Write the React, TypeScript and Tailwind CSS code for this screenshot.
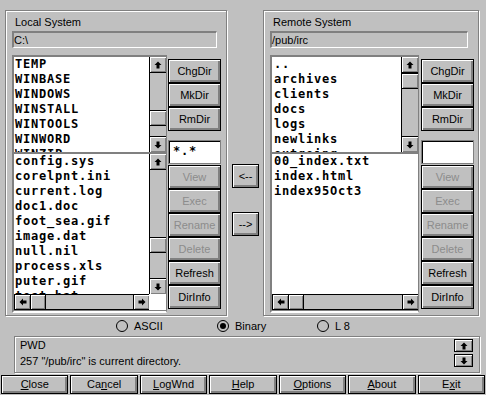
import React from "react";

const sans = "font-['Liberation_Sans',Arial,sans-serif]";
const mono =
  "font-['DejaVu_Sans_Mono',monospace] font-bold text-[12px] tracking-[0.78px] leading-[15px] whitespace-nowrap";
const raised = "shadow-[inset_1px_1px_0_#fff,inset_-2px_-2px_0_#808080]";
const etched = "border border-[#808080] shadow-[inset_1px_1px_0_#fff,1px_1px_0_#fff]";

type Dir = "up" | "down" | "left" | "right";

function Arrow({ dir }: { dir: Dir }) {
  const rot = { up: 0, down: 180, left: 270, right: 90 }[dir];
  return (
    <svg width="8" height="8" viewBox="0 0 8 8">
      <g transform={`rotate(${rot} 4 4)`}>
        <path d="M4 0.5 L7.5 4 L5.5 4 L5.5 7.5 L2.5 7.5 L2.5 4 L0.5 4 Z" fill="#000" />
      </g>
    </svg>
  );
}

function SBtn({ dir, className = "" }: { dir: Dir; className?: string }) {
  return (
    <div
      className={`flex items-center justify-center bg-[#c0c0c0] shadow-[inset_1px_1px_0_#fff,inset_-1px_-1px_0_#808080] ${className}`}
    >
      <Arrow dir={dir} />
    </div>
  );
}

function VScroll({ thumb }: { thumb: string }) {
  return (
    <div className="flex w-[17px] shrink-0 flex-col border-l border-black bg-[#c0c0c0]">
      <SBtn dir="up" className="h-[16px] border-b border-black" />
      <div
        className={`h-[16px] border-y border-black bg-[#c0c0c0] shadow-[inset_1px_1px_0_#fff,inset_-1px_-1px_0_#808080] ${thumb}`}
      />
      <SBtn dir="down" className="mt-auto h-[16px] border-t border-black" />
    </div>
  );
}

function HScroll() {
  return (
    <div className="flex h-[16px] flex-1 border-y border-l border-black bg-[#c0c0c0]">
      <SBtn dir="left" className="w-[16px] border-r border-black" />
      <div className="w-[15px] border-r border-black shadow-[inset_1px_1px_0_#fff,inset_-1px_-1px_0_#808080]" />
      <div className="flex-1" />
      <SBtn dir="right" className="w-[16px] border-l border-black" />
    </div>
  );
}

function Btn({
  label,
  disabled,
  className = "",
}: {
  label: React.ReactNode;
  disabled?: boolean;
  className?: string;
}) {
  return (
    <div
      className={`flex shrink-0 items-center justify-center border border-black bg-[#c0c0c0] leading-none ${raised} ${
        disabled ? "text-[#8c8c8c]" : "text-black"
      } ${className}`}
    >
      {label}
    </div>
  );
}

type PanelProps = {
  title: string;
  path: string;
  dirs: string[];
  files: string[];
  w: string;
  pathW: string;
  listW: string;
  gap: string;
  dirThumb: string;
  fileThumb?: string;
  filter: string;
  textPad: string;
};

function Panel(p: PanelProps) {
  return (
    <div className={`${p.w} h-[306px] shrink-0 pl-[6px] pt-[5px] ${etched}`}>
      <div className="h-[12px] pl-[3px] leading-[12px]">{p.title}</div>
      <div
        className={`${p.pathW} mt-[3px] h-[17px] border-t-2 border-l-2 border-[#808080] border-b border-r border-b-white border-r-white leading-[14px]`}
      >
        {p.path}
      </div>
      <div className={`mt-[7px] flex ${p.gap}`}>
        <div className={`${p.listW} flex flex-col`}>
          <div className="flex h-[97px] overflow-hidden border-t-2 border-l-2 border-r border-[#808080] bg-white">
            <div className={`flex-1 overflow-hidden ${p.textPad} ${mono}`}>
              {p.dirs.map((d) => (
                <div key={d}>{d}</div>
              ))}
            </div>
            <VScroll thumb={p.dirThumb} />
          </div>
          <div className="flex h-[161px] flex-col border-t-2 border-l-2 border-r border-[#808080] border-b-2 border-b-white bg-white">
            <div className="flex min-h-0 flex-1 overflow-hidden">
              <div className={`flex-1 overflow-hidden ${p.textPad} ${mono}`}>
                {p.files.map((f) => (
                  <div key={f}>{f}</div>
                ))}
              </div>
              {p.fileThumb && <VScroll thumb={p.fileThumb} />}
            </div>
            <div className="flex h-[16px]">
              <HScroll />
              {p.fileThumb && <div className="w-[17px] bg-white" />}
            </div>
            <div className="h-[1px] bg-[#808080]" />
          </div>
        </div>
        <div className="flex w-[53px] flex-col pt-[4px]">
          <Btn label="ChgDir" className="h-[24px]" />
          <Btn label="MkDir" className="h-[24px]" />
          <Btn label="RmDir" className="h-[24px]" />
          <div
            className={`mt-[9px] h-[24px] border border-[#808080] bg-white pl-[4px] pt-[3px] shadow-[inset_1px_1px_0_#000] ${mono}`}
          >
            {p.filter}
          </div>
          <Btn label="View" disabled className="mt-[1px] h-[24px]" />
          <Btn label="Exec" disabled className="h-[24px]" />
          <Btn label="Rename" disabled className="h-[24px]" />
          <Btn label="Delete" disabled className="h-[24px]" />
          <Btn label="Refresh" className="h-[24px]" />
          <Btn label="DirInfo" className="h-[24px]" />
        </div>
      </div>
    </div>
  );
}

function Radio({ label, checked, className = "" }: { label: string; checked?: boolean; className?: string }) {
  return (
    <div className={`flex items-center gap-[6px] ${className}`}>
      <svg width="12" height="12" viewBox="0 0 12 12">
        <circle cx="6" cy="6" r="5.5" fill="none" stroke="#000" />
        {checked && <circle cx="6" cy="6" r="3" fill="#000" />}
      </svg>
      <span>{label}</span>
    </div>
  );
}

function U({ pre, u, post }: { pre?: string; u: string; post: string }) {
  return (
    <span>
      {pre}
      <span className="underline underline-offset-[1px]">{u}</span>
      {post}
    </span>
  );
}

export default function App() {
  return (
    <div className={`h-[395px] w-[486px] overflow-hidden bg-[#c0c0c0] text-[11px] text-black ${sans}`}>
      <div className="flex pl-[5px] pt-[10px]">
        <Panel
          title="Local System"
          path="C:\"
          dirs={["TEMP", "WINBASE", "WINDOWS", "WINSTALL", "WINTOOLS", "WINWORD", "WINZIP"]}
          files={[
            "config.sys",
            "corelpnt.ini",
            "current.log",
            "doc1.doc",
            "foot_sea.gif",
            "image.dat",
            "null.nil",
            "process.xls",
            "puter.gif",
            "test.bat",
          ]}
          w="w-[222px]"
          pathW="w-[205px]"
          listW="w-[155px]"
          gap="gap-[1px]"
          dirThumb="mt-[37px]"
          fileThumb="mt-[67px]"
          filter="*.*"
          textPad="pl-[1px]"
        />
        <div className="flex w-[36px] shrink-0 flex-col gap-[24px] pl-[5px] pt-[154px]">
          <Btn label="<--" className="h-[24px] w-[27px]" />
          <Btn label="-->" className="h-[24px] w-[27px]" />
        </div>
        <Panel
          title="Remote System"
          path="/pub/irc"
          dirs={["..", "archives", "clients", "docs", "logs", "newlinks", "outgoing"]}
          files={["00_index.txt", "index.html", "index95Oct3"]}
          w="w-[216px]"
          pathW="w-[198px]"
          listW="w-[149px]"
          gap="gap-[2px]"
          dirThumb="mt-0"
          filter=""
          textPad="pl-[2px]"
        />
      </div>

      <div className="flex h-[20px] items-center pl-[116px]">
        <Radio label="ASCII" className="w-[101px]" />
        <Radio label="Binary" checked className="w-[100px]" />
        <Radio label="L 8" />
      </div>

      <div className={`ml-[14px] flex h-[37px] w-[466px] ${etched}`}>
        <div className="flex-1 pl-[5px] leading-[16px]">
          <div>PWD</div>
          <div>257 "/pub/irc" is current directory.</div>
        </div>
        <div className="flex flex-col gap-[2px] pr-[6px] pt-[2px]">
          <SBtn dir="up" className="h-[13px] w-[19px] border border-black" />
          <SBtn dir="down" className="h-[13px] w-[19px] border border-black" />
        </div>
      </div>

      <div className="mt-[2px] grid h-[19px] grid-cols-7 gap-[2px] px-[1px]">
        <Btn label={<U u="C" post="lose" />} />
        <Btn label={<U pre="Ca" u="n" post="cel" />} />
        <Btn label={<U u="L" post="ogWnd" />} />
        <Btn label={<U u="H" post="elp" />} />
        <Btn label={<U u="O" post="ptions" />} />
        <Btn label={<U u="A" post="bout" />} />
        <Btn label={<U pre="E" u="x" post="it" />} />
      </div>
    </div>
  );
}
